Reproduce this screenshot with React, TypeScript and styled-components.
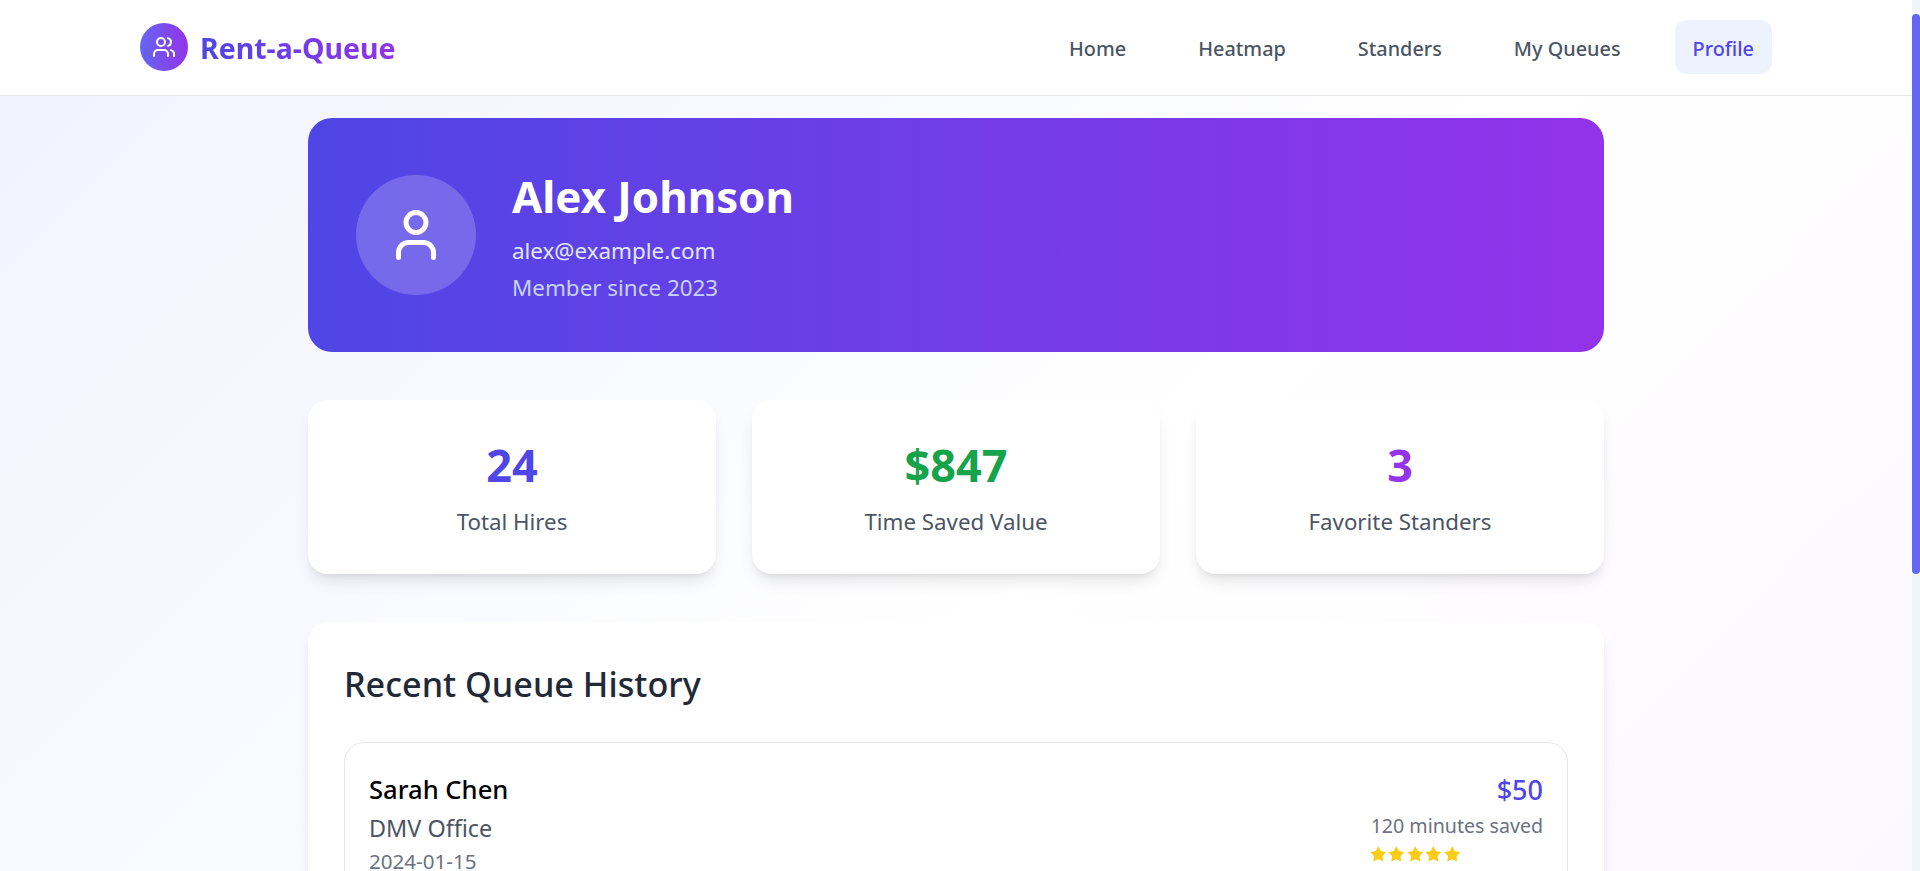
import React from 'react'
import styled, { createGlobalStyle } from 'styled-components'
import { Users, User, Star } from 'lucide-react'

const GlobalStyle = createGlobalStyle`
  * {
    box-sizing: border-box;
  }

  html {
    background: #fff;
  }

  body {
    margin: 0;
    font-family: 'Noto Sans', 'Open Sans', sans-serif;
  }
`

const Page = styled.div`
  width: calc(100% - 8px);
  min-height: 1321px;
  background: linear-gradient(135deg, #f0f2ff 0%, #ffffff 50%, #faf5ff 100%);
`

const ScrollRail = styled.div`
  position: fixed;
  top: 0;
  right: 0;
  width: 8px;
  height: 100vh;
  padding-top: 14px;
  background: #f1f5f9;
`

const ScrollThumb = styled.div`
  height: 560px;
  border-radius: 4px;
  background: #6366f1;
`

const Header = styled.header`
  height: 96px;
  background: #fff;
  border-bottom: 1px solid #e5e7eb;
`

const HeaderInner = styled.div`
  max-width: 1632px;
  height: 100%;
  margin: 0 auto;
  padding-bottom: 1px;
  display: flex;
  align-items: center;
  justify-content: space-between;
`

const Brand = styled.div`
  display: flex;
  align-items: center;
  gap: 12px;
`

const BrandMark = styled.div`
  width: 48px;
  height: 48px;
  border-radius: 50%;
  background: linear-gradient(90deg, #6366f1, #9333ea);
  color: #fff;
  display: flex;
  align-items: center;
  justify-content: center;
`

const BrandName = styled.span`
  padding-top: 2px;
  font-size: 28.5px;
  font-weight: 700;
  background: linear-gradient(90deg, #4f46e5, #9333ea);
  -webkit-background-clip: text;
  background-clip: text;
  color: transparent;
`

const Nav = styled.nav`
  display: flex;
  align-items: center;
  gap: 36px;
`

const NavLink = styled.a<{ $active?: boolean }>`
  padding: 14px 18px 10px;
  border-radius: 12px;
  font-size: 19.85px;
  font-weight: 500;
  line-height: 30px;
  height: 54px;
  color: ${(p) => (p.$active ? '#4f46e5' : '#4b5563')};
  background: ${(p) => (p.$active ? '#eef2ff' : 'transparent')};
`

const Main = styled.main`
  max-width: 1296px;
  margin: 0 auto;
  padding-top: 22px;
`

const Hero = styled.section`
  height: 234px;
  padding: 0 48px;
  border-radius: 24px;
  background: linear-gradient(90deg, #4f46e5, #9333ea);
  display: flex;
  align-items: center;
  gap: 36px;
  color: #fff;
  margin-bottom: 48px;
`

const Avatar = styled.div`
  width: 120px;
  height: 120px;
  border-radius: 50%;
  background: rgba(255, 255, 255, 0.2);
  display: flex;
  align-items: center;
  justify-content: center;
`

const HeroName = styled.h1`
  margin: 2px 0 8px;
  font-size: 43.8px;
  font-weight: 700;
  line-height: 58px;
`

const HeroEmail = styled.p`
  margin: 5px 0 0;
  font-size: 22.4px;
  line-height: 36px;
  color: #e0e7ff;
`

const HeroSince = styled.p`
  margin: 1px 0 0;
  font-size: 22.4px;
  line-height: 36px;
  color: #c7d2fe;
`

const Stats = styled.section`
  display: grid;
  grid-template-columns: repeat(3, 1fr);
  gap: 36px;
  margin-bottom: 48px;
`

const StatCard = styled.div`
  height: 174px;
  padding-top: 34px;
  border-radius: 20px;
  background: #fff;
  text-align: center;
  box-shadow: 0 10px 15px -3px rgba(0, 0, 0, 0.1), 0 4px 6px -4px rgba(0, 0, 0, 0.1);
`

const StatValue = styled.div<{ $color: string }>`
  font-size: 45px;
  font-weight: 700;
  line-height: 62px;
  color: ${(p) => p.$color};
`

const StatLabel = styled.div`
  margin-top: 10px;
  font-size: 22.3px;
  line-height: 32px;
  color: #4b5563;
`

const HistoryCard = styled.section`
  padding: 36px;
  border-radius: 20px;
  background: #fff;
  box-shadow: 0 10px 15px -3px rgba(0, 0, 0, 0.1), 0 4px 6px -4px rgba(0, 0, 0, 0.1);
`

const HistoryTitle = styled.h2`
  margin: 0 0 34px;
  padding-top: 2px;
  font-size: 34.2px;
  font-weight: 500;
  line-height: 48px;
  color: #1f2937;
`

const HistoryRow = styled.div`
  display: flex;
  justify-content: space-between;
  padding: 31px 24px 24px;
  border: 1px solid #e5e7eb;
  border-radius: 20px;
`

const RowName = styled.div`
  font-size: 25.6px;
  font-weight: 500;
  line-height: 32px;
  color: #000;
`

const RowPlace = styled.div`
  margin-top: 4px;
  font-size: 23.4px;
  line-height: 36px;
  color: #4b5563;
`

const RowDate = styled.div`
  font-size: 20.6px;
  line-height: 30px;
  color: #6b7280;
`

const RowSide = styled.div`
  text-align: right;
`

const RowPrice = styled.div`
  font-size: 27px;
  font-weight: 500;
  line-height: 32px;
  color: #4f46e5;
`

const RowSaved = styled.div`
  margin-top: 3px;
  font-size: 19.6px;
  line-height: 34px;
  color: #6b7280;
`

const Stars = styled.div`
  display: flex;
  margin: 2px 0 0 -2px;
  color: #facc15;
`

const navItems = ['Home', 'Heatmap', 'Standers', 'My Queues']

const stats = [
  { value: '24', label: 'Total Hires', color: '#4f46e5' },
  { value: '$847', label: 'Time Saved Value', color: '#16a34a' },
  { value: '3', label: 'Favorite Standers', color: '#9333ea' }
]

export default function App() {
  return (
    <Page>
      <GlobalStyle />
      <ScrollRail>
        <ScrollThumb />
      </ScrollRail>
      <Header>
        <HeaderInner>
          <Brand>
            <BrandMark>
              <Users size={24} strokeWidth={2} />
            </BrandMark>
            <BrandName>Rent-a-Queue</BrandName>
          </Brand>
          <Nav>
            {navItems.map((item) => (
              <NavLink key={item}>{item}</NavLink>
            ))}
            <NavLink $active>Profile</NavLink>
          </Nav>
        </HeaderInner>
      </Header>
      <Main>
        <Hero>
          <Avatar>
            <User size={60} strokeWidth={2} />
          </Avatar>
          <div>
            <HeroName>Alex Johnson</HeroName>
            <HeroEmail>alex@example.com</HeroEmail>
            <HeroSince>Member since 2023</HeroSince>
          </div>
        </Hero>
        <Stats>
          {stats.map((s) => (
            <StatCard key={s.label}>
              <StatValue $color={s.color}>{s.value}</StatValue>
              <StatLabel>{s.label}</StatLabel>
            </StatCard>
          ))}
        </Stats>
        <HistoryCard>
          <HistoryTitle>Recent Queue History</HistoryTitle>
          <HistoryRow>
            <div>
              <RowName>Sarah Chen</RowName>
              <RowPlace>DMV Office</RowPlace>
              <RowDate>2024-01-15</RowDate>
            </div>
            <RowSide>
              <RowPrice>$50</RowPrice>
              <RowSaved>120 minutes saved</RowSaved>
              <Stars>
                {[0, 1, 2, 3, 4].map((i) => (
                  <Star key={i} size={18.6} fill="currentColor" strokeWidth={0} />
                ))}
              </Stars>
            </RowSide>
          </HistoryRow>
        </HistoryCard>
      </Main>
    </Page>
  )
}
